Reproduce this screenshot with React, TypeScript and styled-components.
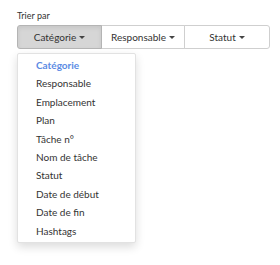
import React from "react";
import styled, { createGlobalStyle } from "styled-components";

const Global = createGlobalStyle`
  html, body { margin: 0; padding: 0; background: #fff; }
  body { font-family: Lato, "Open Sans", sans-serif; color: #333; }
`;

const Page = styled.div`
  display: flex;
  flex-direction: column;
  align-items: flex-start;
  padding: 10px 0 22px 17px;
`;

const Label = styled.div`
  font-size: 9px;
  line-height: 11px;
  color: #333;
  margin-bottom: 4px;
`;

const Group = styled.div`
  display: flex;
`;

const Btn = styled.button<{ $w: number; $active?: boolean; $first?: boolean; $last?: boolean }>`
  box-sizing: border-box;
  width: ${(p) => p.$w}px;
  height: 24px;
  margin-left: ${(p) => (p.$first ? 0 : -1)}px;
  padding: 0;
  font-family: Lato, sans-serif;
  font-size: 10px;
  color: #333;
  background: ${(p) => (p.$active ? "#d6d6d6" : "#fff")};
  border: 1px solid ${(p) => (p.$active ? "#b4b4b4" : "#cfcfcf")};
  border-radius: ${(p) => (p.$first ? "3px 0 0 3px" : p.$last ? "0 3px 3px 0" : "0")};
  box-shadow: ${(p) => (p.$active ? "inset 0 2px 4px rgba(0,0,0,0.08)" : "none")};
  position: relative;
  z-index: ${(p) => (p.$active ? 1 : 0)};
  display: flex;
  align-items: center;
  justify-content: center;
  gap: 3px;
  cursor: pointer;
`;

const Caret = styled.span`
  width: 0;
  height: 0;
  border-left: 3px solid transparent;
  border-right: 3px solid transparent;
  border-top: 3px solid #444;
  margin-top: 1px;
`;

const Menu = styled.ul`
  box-sizing: border-box;
  width: 119px;
  margin: 4px 0 0;
  padding: 2px 0;
  list-style: none;
  background: #fff;
  border: 1px solid #e2e2e2;
  border-radius: 2px;
  box-shadow: 0 4px 10px rgba(0, 0, 0, 0.14);
`;

const Item = styled.li<{ $selected?: boolean }>`
  font-size: 10px;
  line-height: 18.4px;
  padding: 0 0 0 18px;
  color: ${(p) => (p.$selected ? "#5b8be4" : "#333")};
  font-weight: ${(p) => (p.$selected ? 700 : 400)};
  white-space: nowrap;
`;

const items = [
  "Catégorie",
  "Responsable",
  "Emplacement",
  "Plan",
  "Tâche n°",
  "Nom de tâche",
  "Statut",
  "Date de début",
  "Date de fin",
  "Hashtags",
];

export default function App() {
  return (
    <>
      <Global />
      <Page>
        <Label>Trier par</Label>
        <Group>
          <Btn $w={85} $active $first>
            Catégorie <Caret />
          </Btn>
          <Btn $w={84}>
            Responsable <Caret />
          </Btn>
          <Btn $w={86} $last>
            Statut <Caret />
          </Btn>
        </Group>
        <Menu>
          {items.map((t, i) => (
            <Item key={t} $selected={i === 0}>
              {t}
            </Item>
          ))}
        </Menu>
      </Page>
    </>
  );
}
